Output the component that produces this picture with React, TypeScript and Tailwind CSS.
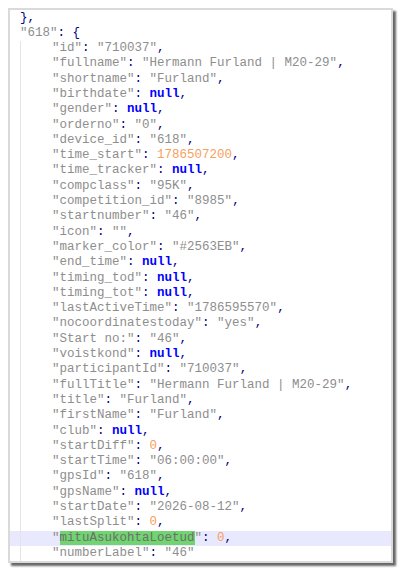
type Kind = "s" | "n" | "null";

interface Row {
  k: string;
  v: string;
  t: Kind;
  mark?: boolean;
}

const rows: Row[] = [
  { k: "id", v: "710037", t: "s" },
  { k: "fullname", v: "Hermann Furland | M20-29", t: "s" },
  { k: "shortname", v: "Furland", t: "s" },
  { k: "birthdate", v: "null", t: "null" },
  { k: "gender", v: "null", t: "null" },
  { k: "orderno", v: "0", t: "s" },
  { k: "device_id", v: "618", t: "s" },
  { k: "time_start", v: "1786507200", t: "n" },
  { k: "time_tracker", v: "null", t: "null" },
  { k: "compclass", v: "95K", t: "s" },
  { k: "competition_id", v: "8985", t: "s" },
  { k: "startnumber", v: "46", t: "s" },
  { k: "icon", v: "", t: "s" },
  { k: "marker_color", v: "#2563EB", t: "s" },
  { k: "end_time", v: "null", t: "null" },
  { k: "timing_tod", v: "null", t: "null" },
  { k: "timing_tot", v: "null", t: "null" },
  { k: "lastActiveTime", v: "1786595570", t: "s" },
  { k: "nocoordinatestoday", v: "yes", t: "s" },
  { k: "Start no:", v: "46", t: "s" },
  { k: "voistkond", v: "null", t: "null" },
  { k: "participantId", v: "710037", t: "s" },
  { k: "fullTitle", v: "Hermann Furland | M20-29", t: "s" },
  { k: "title", v: "Furland", t: "s" },
  { k: "firstName", v: "Furland", t: "s" },
  { k: "club", v: "null", t: "null" },
  { k: "startDiff", v: "0", t: "n" },
  { k: "startTime", v: "06:00:00", t: "s" },
  { k: "gpsId", v: "618", t: "s" },
  { k: "gpsName", v: "null", t: "null" },
  { k: "startDate", v: "2026-08-12", t: "s" },
  { k: "lastSplit", v: "0", t: "n" },
  { k: "mituAsukohtaLoetud", v: "0", t: "n", mark: true },
  { k: "numberLabel", v: "46", t: "s" },
];

function Value({ row }: { row: Row }) {
  if (row.t === "null") return <span className="font-bold text-[#0000ff]">{row.v}</span>;
  if (row.t === "n") return <span className="text-[#f8a060]">{row.v}</span>;
  return <span className="text-[#8e8e8e]">"{row.v}"</span>;
}

export default function App() {
  return (
    <div className="w-[402px] h-[573px] bg-white pt-2 pl-2">
      <div
        className="w-[385px] h-[555px] border-2 border-[#dadada] bg-white shadow-[3px_3px_2px_rgba(0,0,0,0.6)] overflow-hidden pt-[0.5px] text-[12.5px] leading-[15.3px] whitespace-pre"
        style={{ fontFamily: '"Liberation Mono", "Courier New", monospace' }}
      >
        <div className="pl-[10px] text-[#000080]">{"},"}</div>
        <div className="pl-[10px]">
          <span className="text-[#8e8e8e]">"618"</span>
          <span className="text-[#000080]">{": {"}</span>
        </div>
        {rows.map((row, i) => (
          <div key={row.k} className={`flex ${row.mark ? "bg-[#e8e8ff]" : ""}`}>
            <div className="w-[10px] shrink-0" />
            <div className="border-l border-[#e4e4e4] pl-[31px]">
              <span className="text-[#8e8e8e]">
                "{row.mark ? <span className="bg-[#70d470] text-[#6e6e6e]">{row.k}</span> : row.k}"
              </span>
              <span className="text-[#000080]">{": "}</span>
              <Value row={row} />
              {i < rows.length - 1 && <span className="text-[#000080]">,</span>}
            </div>
          </div>
        ))}
      </div>
    </div>
  );
}
